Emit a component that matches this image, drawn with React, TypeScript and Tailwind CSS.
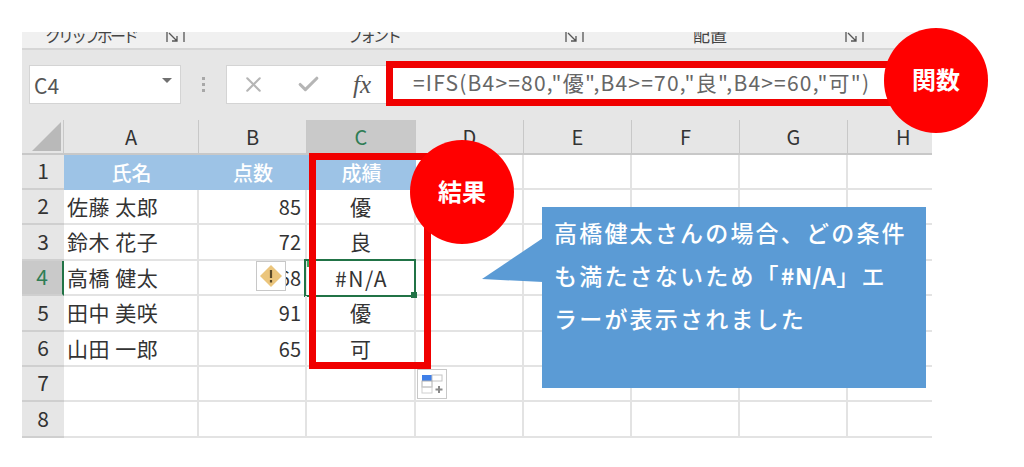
import React from 'react';
import { X, Check } from 'lucide-react';

const font = 'font-["Noto_Sans_CJK_JP","Noto_Sans",sans-serif]';
const cols = 'grid grid-cols-[42px_135px_108px_109px_108px_108px_108px_108px_84px]';

const people = [
  { no: 2, name: '佐藤 太郎', score: '85', grade: '優' },
  { no: 3, name: '鈴木 花子', score: '72', grade: '良' },
  { no: 4, name: '高橋 健太', score: '68', grade: '#N/A' },
  { no: 5, name: '田中 美咲', score: '91', grade: '優' },
  { no: 6, name: '山田 一郎', score: '65', grade: '可' },
];

const Launcher = ({ className }: { className: string }) => (
  <svg className={`shrink-0 mb-[4px] ${className}`} width="20" height="12" viewBox="0 0 20 12" fill="none" stroke="#555" strokeWidth="1.3">
    <path d="M1 0v10M3 1l8 8M11 4v5H6M18 0v10" />
  </svg>
);

const Empty = ({ last }: { last?: boolean }) => (
  <div className={`border-b-2 border-[#e3e3e3] ${last ? '' : 'border-r-2'}`} />
);

const EmptyRun = () => (
  <>
    <Empty /><Empty /><Empty /><Empty /><Empty last />
  </>
);

const RowHead = ({ n, active }: { n: number; active?: boolean }) => (
  <div
    className={`flex items-center justify-center text-[21px] pb-[1px] border-b-2 border-[#cfcfcf] ${
      active ? 'bg-[#c9c9c9] text-[#2f7d55] border-r-2 border-r-[#217346]' : 'bg-[#e6e6e6] text-[#333]'
    }`}
  >
    {n}
  </div>
);

const App: React.FC = () => {
  return (
    <div className={`relative w-[1024px] h-[467px] overflow-hidden bg-white pt-[32px] pl-[22px] ${font}`}>
      <div className="w-[910px]">
        {/* Ribbon labels, cut off at the top as in the capture */}
        <div className="h-[18px] bg-[#f0f0f0] border-b-2 border-[#d6d6d6] overflow-hidden flex items-end leading-[16px] text-[#444] whitespace-nowrap">
          <div className="w-[91px] ml-[23px] shrink-0 mb-[5px] text-[16px] tracking-[-3px]">クリップボード</div>
          <Launcher className="ml-[30px]" />
          <div className="w-[50px] ml-[161px] shrink-0 mb-[5px] text-[16px] tracking-[-3px]">フォント</div>
          <Launcher className="ml-[168px]" />
          <div className="w-[35px] ml-[108px] shrink-0 mb-[5px] text-[17px]">配置</div>
          <Launcher className="ml-[117px]" />
        </div>

        {/* Formula bar */}
        <div className="h-[70px] bg-[#e6e6e6] flex items-start pt-[15px] pl-[7px]">
          <div className="w-[152px] h-[39px] bg-white border border-[#d4d4d4] flex items-center justify-between pl-[4px] pr-[8px] text-[21px] text-[#555]">
            <span className="mt-[3px]">C4</span>
            <span className="w-0 h-0 mb-[9px] border-x-[5px] border-x-transparent border-t-[5px] border-t-[#707070]" />
          </div>
          <div className="w-[45px] h-[39px] flex flex-col items-center justify-center gap-[3px]">
            <span className="w-[3px] h-[3px] bg-[#a8a8a8]" />
            <span className="w-[3px] h-[3px] bg-[#a8a8a8]" />
            <span className="w-[3px] h-[3px] bg-[#a8a8a8]" />
          </div>
          <div className="w-[678px] h-[39px] bg-white border border-[#d4d4d4] flex items-center">
            <div className="w-[53px] flex justify-center"><X size={25} strokeWidth={2} className="text-[#b5b5b5]" /></div>
            <div className="w-[57px] flex justify-center"><Check size={25} strokeWidth={3} className="text-[#b5b5b5]" /></div>
            <div className='w-[50px] text-center text-[25px] italic text-[#555] font-["Liberation_Serif",serif]'>fx</div>
            <div className="pl-[26px] mb-[4px] text-[21px] leading-none tracking-[1.2px] text-[#666] whitespace-nowrap">
              =IFS(B4&gt;=80,"優",B4&gt;=70,"良",B4&gt;=60,"可")
            </div>
          </div>
        </div>

        {/* Sheet */}
        <div className={`${cols} grid-rows-[35px_35px_35px_36px_35px_36px_35px_35px_36px] text-[20px] text-[#333]`}>
          <div className="bg-[#e6e6e6] border-r border-b-2 border-[#c8c8c8] flex items-end justify-end pr-[2px] pb-[2px]">
            <div className="w-0 h-0 border-l-[29px] border-l-transparent border-b-[29px] border-b-[#b9b9b9]" />
          </div>
          {['A', 'B', 'C', 'D', 'E', 'F', 'G'].map((c) => (
            <div
              key={c}
              className={`flex items-center justify-center text-[20px] border-r border-b-2 border-[#c8c8c8] ${
                c === 'C' ? 'bg-[#c9c9c9] text-[#2f7d55]' : 'bg-[#e6e6e6] text-[#333]'
              }`}
            >
              {c}
            </div>
          ))}
          {/* column H runs past the cropped edge, so its letter is not centred in what shows */}
          <div className="bg-[#e6e6e6] flex items-center pl-[48px] text-[20px] text-[#333] border-b-2 border-[#c8c8c8]">H</div>

          <RowHead n={1} />
          <div className="bg-[#9dc3e6] text-white font-medium flex items-center justify-center">氏名</div>
          <div className="bg-[#9dc3e6] text-white font-medium flex items-center justify-center">点数</div>
          <div className="bg-[#9dc3e6] text-white font-medium flex items-center justify-center">成績</div>
          <EmptyRun />

          {people.map((p) => (
            <React.Fragment key={p.no}>
              <RowHead n={p.no} active={p.no === 4} />
              <div className="flex items-center pl-[3px] text-[21px] tracking-[0.5px] border-r-2 border-b-2 border-[#e3e3e3] whitespace-nowrap">{p.name}</div>
              <div className="relative flex items-center justify-end pr-[4px] border-r-2 border-b-2 border-[#e3e3e3]">
                {p.score}
                {p.no === 4 && (
                  <div className="absolute left-[57px] top-0 w-[30px] h-[30px] bg-white border border-[#c8c8c8] flex items-center justify-center">
                    <svg width="24" height="24" viewBox="0 0 24 24">
                      <path d="M12 1l11 11-11 11L1 12z" fill="#ebc57c" />
                      <path d="M12 6v8M12 16v2.5" stroke="#5a4a2a" strokeWidth="2.2" />
                    </svg>
                  </div>
                )}
              </div>
              {p.no === 4 ? (
                <div className="relative flex items-center justify-center text-[21px] tracking-[1.5px]">
                  {p.grade}
                  <span className="absolute left-0 top-0 w-[5px] h-[6px] bg-[#3fa35f]" />
                  <span className="absolute -left-[3px] -top-[2px] right-0 -bottom-[1px] border-2 border-[#217346]" />
                  <span className="absolute right-[-1px] bottom-[-2px] w-[6px] h-[6px] bg-[#217346]" />
                </div>
              ) : (
                <div className="flex items-center justify-center text-[21px] border-r-2 border-b-2 border-[#e3e3e3]">{p.grade}</div>
              )}
              <EmptyRun />
            </React.Fragment>
          ))}

          {[7, 8].map((n) => (
            <React.Fragment key={n}>
              <RowHead n={n} />
              <Empty /><Empty /><Empty />
              <EmptyRun />
            </React.Fragment>
          ))}
        </div>
      </div>

      {/* Quick analysis button */}
      <div className="absolute left-[417px] top-[369px] w-[30px] h-[30px] bg-white border border-[#c8c8c8]">
        <svg width="28" height="28" viewBox="0 0 28 28" fill="none">
          <rect x="4" y="5" width="10" height="6" fill="#3f7fe8" />
          <rect x="14" y="5" width="10" height="6" stroke="#c4c4c4" />
          <rect x="4" y="11" width="10" height="6" stroke="#b0b0b0" />
          <rect x="4" y="17" width="10" height="6" stroke="#d0d0d0" />
          <path d="M21 16v7M17.5 19.5h7" stroke="#8a8a8a" strokeWidth="2" />
        </svg>
      </div>

      {/* Red annotation frames */}
      <div className="absolute left-[386px] top-[61px] w-[510px] h-[45px] border-[7px] border-[#f00000]" />
      <div className="absolute left-[309px] top-[153px] w-[122px] h-[216px] border-[7px] border-[#f00000]" />

      <div className="absolute left-[884px] top-[28px] w-[104px] h-[105px] pb-[3px] rounded-full bg-[#ff0000] text-white text-[24px] font-bold flex items-center justify-center">
        関数
      </div>
      <div className="absolute left-[410px] top-[140px] w-[104px] h-[104px] pb-[2px] rounded-full bg-[#ff0000] text-white text-[24px] font-bold flex items-center justify-center">
        結果
      </div>

      {/* Callout */}
      <svg className="absolute left-[482px] top-[238px]" width="61" height="44" viewBox="0 0 61 44">
        <path d="M61 0L0 41l61 3z" fill="#5b9bd5" />
      </svg>
      <div className="absolute left-[542px] top-[207px] w-[384px] h-[181px] bg-[#5b9bd5] pl-[12px] pt-[4px] text-white text-[23px] leading-[43px] tracking-[2.2px] font-medium whitespace-nowrap">
        <div>高橋健太さんの場合、どの条件</div>
        <div>も満たさないため「<span className="font-semibold tracking-[0.5px]">#N/A</span>」エ</div>
        <div>ラーが表示されました</div>
      </div>
    </div>
  );
};

export default App;
